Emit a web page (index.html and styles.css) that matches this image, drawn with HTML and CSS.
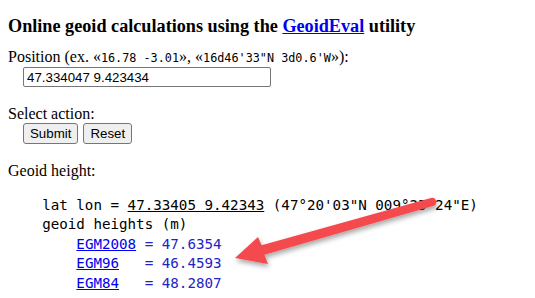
FILE: index.html
```html
<!DOCTYPE html>
<html lang="en">
<head>
    <meta charset="UTF-8">
    <title>Online geoid calculations</title>
    <link rel="stylesheet" href="styles.css">
</head>
<body>
    <h3 class="title">Online geoid calculations using the <a href="#">GeoidEval</a> utility</h3>
    <form class="geoid-form">
        <p>
            Position (ex. «<code>16.78 -3.01</code>», «<code>16d46'33"N 3d0.6'W</code>»):<br>
            <span class="indent"><input type="text" class="position-input" value="47.334047 9.423434"></span>
        </p>
        <p>
            Select action:<br>
            <span class="indent">
                <button type="submit" class="btn">Submit</button>
                <button type="reset" class="btn">Reset</button>
            </span>
        </p>
    </form>
    <p class="result-label">Geoid height:</p>
<pre class="result">    lat lon = <a class="coord" href="#">47.33405 9.42343</a> (47°20'03"N 009°25'24"E)
    geoid heights (m)
        <a href="#">EGM2008</a> <span class="val">= 47.6354</span>
        <a href="#">EGM96</a>   <span class="val">= 46.4593</span>
        <a href="#">EGM84</a>   <span class="val">= 48.2807</span></pre>
    <svg class="arrow" width="535" height="298" viewBox="0 0 535 298">
        <defs>
            <filter id="shadow" x="-20%" y="-30%" width="140%" height="180%">
                <feDropShadow dx="1" dy="3" stdDeviation="2.5" flood-color="#000" flood-opacity="0.35"/>
            </filter>
        </defs>
        <path filter="url(#shadow)" fill="#f44a4e"
              d="M235 258 L258 237 L261.6 245.2 L431 198 A4 4 0 0 1 433 206 L264.4 254.8 L268 264 Z"/>
    </svg>
</body>
</html>
```

FILE: styles.css
```css
body {
    margin: 8px;
    font-family: "Liberation Serif", "Times New Roman", serif;
    font-size: 16px;
    color: #000;
}
.title {
    font-size: 18.2px;
    font-weight: bold;
    margin: 8px 0 11px 0;
}
a {
    color: #0000ee;
}
.geoid-form p {
    margin: 0 0 18px 0;
    line-height: 18px;
}
code {
    font-family: "DejaVu Sans Mono", monospace;
    font-size: 11.8px;
}
.indent {
    display: inline-block;
    padding-left: 15px;
}
.position-input {
    width: 248px;
    height: 20px;
    box-sizing: border-box;
    margin: 0;
    padding: 1px 3px;
    border: 1px solid #767676;
    border-radius: 2px;
    font-family: "Liberation Sans", Arial, sans-serif;
    font-size: 13.3px;
    color: #000;
}
.btn {
    height: 21px;
    margin: 0 1px 0 0;
    padding: 0 6px;
    font-family: "Liberation Sans", Arial, sans-serif;
    font-size: 13.3px;
    background: #efefef;
    border: 1px solid #767676;
    border-radius: 3px;
    color: #000;
}
.result-label {
    margin: 0;
}
.result {
    font-family: "DejaVu Sans Mono", monospace;
    font-size: 14.2px;
    line-height: 19.4px;
    margin: 16px 0 0 0;
    color: #000;
}
.result .coord {
    color: #000;
}
.result .val {
    color: #2323c8;
}
.arrow {
    position: absolute;
    left: 0;
    top: 0;
    pointer-events: none;
}
```
